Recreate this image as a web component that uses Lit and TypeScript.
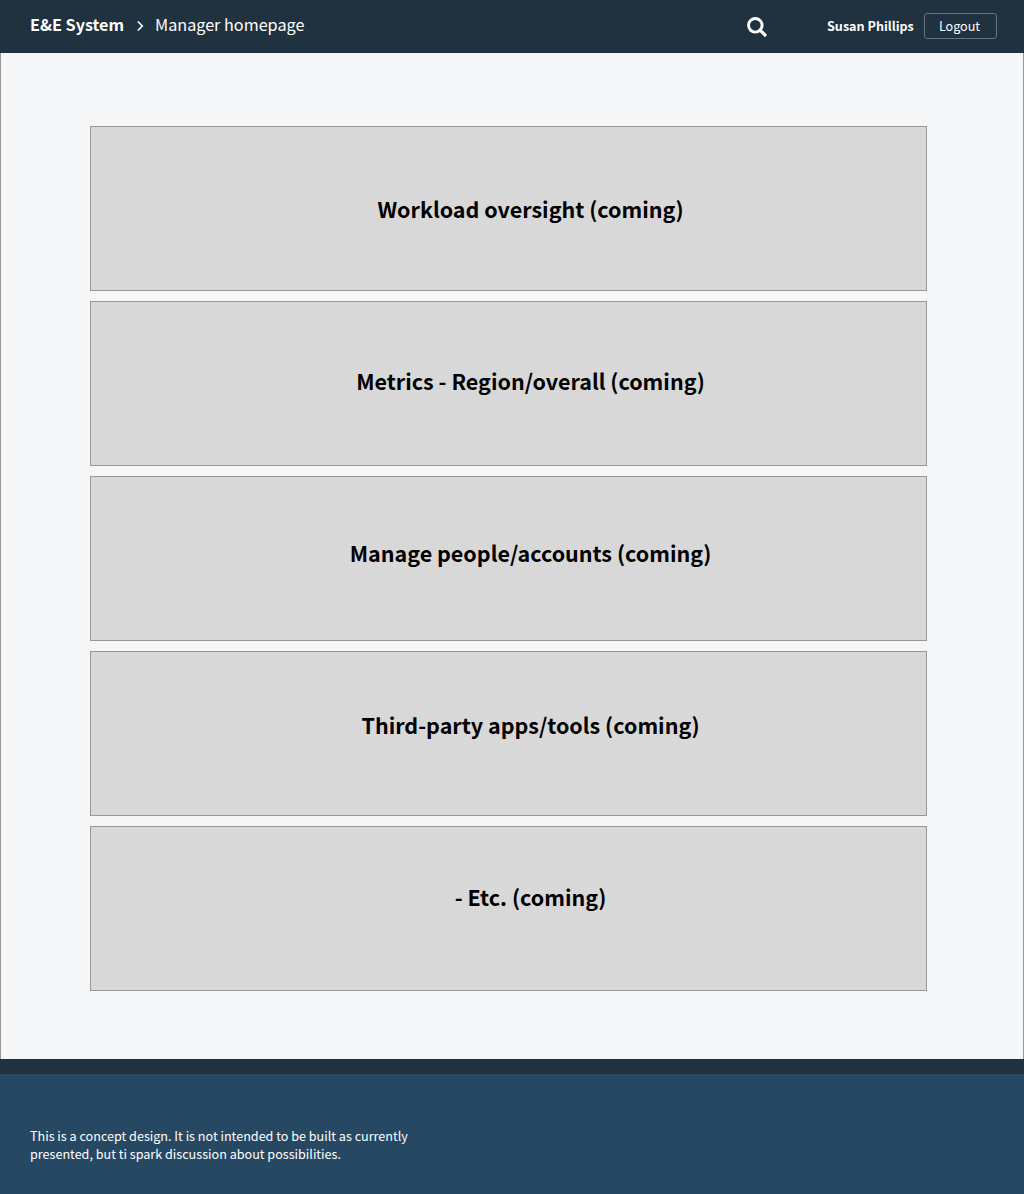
import { LitElement, html, css } from "lit";
import { customElement } from "lit/decorators.js";

const SECTIONS = [
  "Workload oversight (coming)",
  "Metrics - Region/overall (coming)",
  "Manage people/accounts (coming)",
  "Third-party apps/tools (coming)",
  "- Etc. (coming)",
];

@customElement("app-root")
export class AppRoot extends LitElement {
  static styles = css`
    :host {
      display: flex;
      flex-direction: column;
      height: 1194px;
      box-sizing: border-box;
      overflow: hidden;
      font-family: "Noto Sans CJK SC", "Noto Sans", sans-serif;
      background: #f4f6f8;
      color: #000;
    }
    * { box-sizing: border-box; }
    .header {
      height: 53px;
      flex: none;
      display: flex;
      align-items: center;
      padding: 0 27px 1px 30px;
      background: #20313f;
      color: #fff;
    }
    .brand, .title { font-size: 16.2px; line-height: 26px; padding-bottom: 5px; }
    .brand { width: 94px; white-space: nowrap; font-weight: 700; }
    .chevron { width: 8px; height: 12px; margin: 0 11px 0 12px; }
    .search { width: 20px; height: 20px; margin: 2px 0 0 auto; }
    .user { width: 87px; white-space: nowrap; font-size: 12.6px; font-weight: 700; margin: 0 10px 0 60px; padding-bottom: 2px; }
    .logout {
      width: 73px;
      height: 26px;
      padding: 0 2px 0 0;
      border: 1px solid #66727d;
      border-radius: 3px;
      background: transparent;
      color: #fff;
      font: 12.6px/24px "Noto Sans CJK SC", "Noto Sans", sans-serif;
    }
    .main {
      height: 1006px;
      flex: none;
      display: flex;
      flex-direction: column;
      gap: 10px;
      padding: 73px 96px 0 89px;
      border: solid #979797;
      border-width: 0 1px;
    }
    .card {
      height: 165px;
      flex: none;
      border: 1px solid #979797;
      background: #d8d8d8;
      padding-left: 44px;
      text-align: center;
    }
    .card h2 { margin: 0; font-size: 21.5px; line-height: 34px; font-weight: 700; }
    .c0 { padding-top: 65px; }
    .c1 { padding-top: 62px; }
    .c2 { padding-top: 59px; }
    .c3 { padding-top: 56px; }
    .c4 { padding-top: 53px; }
    .footer {
      flex: 1;
      border-top: 15px solid #20313f;
      background: #274863;
      color: #fff;
      padding: 53px 30px 0;
      font-size: 12.6px;
      line-height: 18px;
    }
    .footer p { margin: 0; }
  `;

  render() {
    return html`
      <header class="header">
        <span class="brand">E&amp;E System</span>
        <svg class="chevron" viewBox="0 0 8 12" fill="none" stroke="#fff" stroke-width="1.6"><path d="M1.8 1.5 6.3 6 1.8 10.5" /></svg>
        <span class="title">Manager homepage</span>
        <svg class="search" viewBox="0 0 20 20" fill="none" stroke="#fff"><circle cx="8.3" cy="8.3" r="6.8" stroke-width="2.9" /><path d="M13.2 13.2 18 18" stroke-width="3.2" stroke-linecap="round" /></svg>
        <span class="user">Susan Phillips</span>
        <button class="logout">Logout</button>
      </header>
      <main class="main">
        ${SECTIONS.map((s, i) => html`<section class="card c${i}"><h2>${s}</h2></section>`)}
      </main>
      <footer class="footer">
        <p>This is a concept design. It is not intended to be built as currently<br />presented, but ti spark discussion about possibilities.</p>
      </footer>
    `;
  }
}
